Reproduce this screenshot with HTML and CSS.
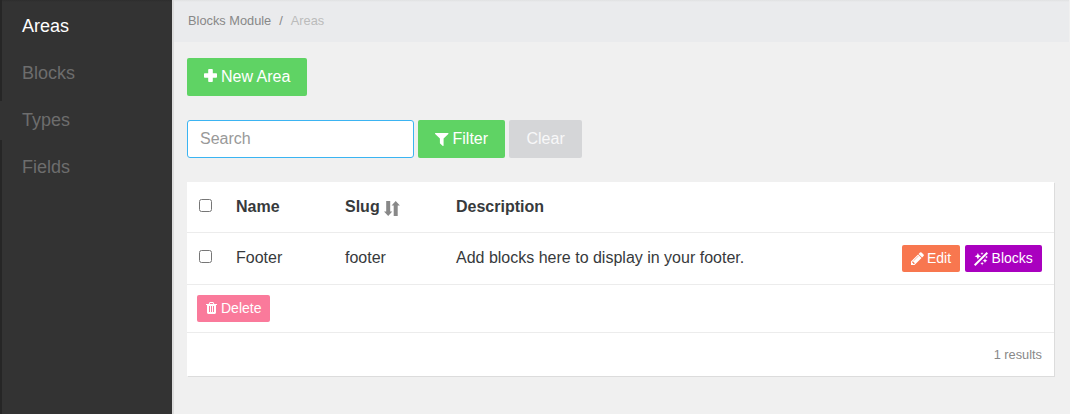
FILE: index.html
```html
<!DOCTYPE html>
<html lang="en">
<head>
<meta charset="utf-8">
<title>Areas</title>
<link rel="stylesheet" href="styles.css">
</head>
<body>
<div class="app">
  <nav class="sidebar">
    <a class="nav-link active">Areas</a>
    <a class="nav-link">Blocks</a>
    <a class="nav-link">Types</a>
    <a class="nav-link">Fields</a>
  </nav>
  <main class="main">
    <div class="breadcrumb"><span>Blocks Module</span><span class="sep">/</span><span class="current">Areas</span></div>
    <div class="content">
      <div class="actions">
        <a class="btn success new-area"><svg class="icon plus" viewBox="0 0 13 13"><path d="M5 0h3q.8 0 .8.8v3.4h3.4q.8 0 .8.8v3q0 .8-.8.8H8.800v3.400q0 .8-.8.8H5q-.8 0-.8-.8V8.800H.8Q0 8.800 0 8V5q0-.8.8-.8h3.400V.8Q4.200 0 5 0z"/></svg>New Area</a>
      </div>
      <form class="filters">
        <input class="search" type="text" placeholder="Search">
        <a class="btn success filter"><svg class="icon funnel" viewBox="192 256 1408 1408" preserveAspectRatio="none"><path d="M1595 295q17 41-14 70l-493 493v742q0 42-39 59-13 5-25 5-27 0-45-19l-256-256q-19-19-19-45v-486l-493-493q-31-29-14-70 17-39 59-39h1280q42 0 59 39z"/></svg>Filter</a>
        <a class="btn muted clear">Clear</a>
      </form>
      <section class="table">
        <div class="row head">
          <input type="checkbox" class="check">
          <span>Name</span>
          <span>Slug <svg class="sort" viewBox="0 0 16 15"><path d="M2.200 0h4v10.500h2.100L4.200 15 0 10.500h2.200zM9.700 15V4.500H7.600L11.700 0l4.200 4.500h-2.200V15z"/></svg></span>
          <span>Description</span>
        </div>
        <div class="row item">
          <input type="checkbox" class="check">
          <span>Footer</span>
          <span>footer</span>
          <span>Add blocks here to display in your footer.</span>
          <div class="buttons">
            <a class="btn small edit"><svg class="icon pencil" viewBox="128 128 1536 1536"><path d="M491 1536l91-91-235-235-91 91v107h128v128h107zm523-928q0-22-22-22-10 0-17 7l-542 542q-7 7-7 17 0 22 22 22 10 0 17-7l542-542q7-7 7-17zm-54-192l416 416-832 832h-416v-416zm683 96q0 53-37 90l-166 166-416-416 166-165q36-38 90-38 53 0 91 38l235 234q37 39 37 91z"/></svg>Edit</a>
            <a class="btn small blocks"><svg class="icon wand" viewBox="0 0 14 14"><path d="M0 12.600 12.600 0 14 1.400 1.400 14z"/><path d="M3.900.9l1 2.300 2.300 1-2.300 1-1 2.300-1-2.300-2.300-1 2.300-1zM11 6.300l.7 1.700 1.700.7-1.700.7-.7 1.700-.7-1.700-1.700-.7 1.700-.7zM8 0l.4 1.200 1.200.4-1.200.4L8 3.200 7.600 2l-1.200-.4 1.200-.4zM8.100 9.800l.5 1.300 1.300.5-1.300.5-.5 1.300-.5-1.300-1.300-.5 1.300-.5zM12.500 3.500l.4 1.100 1.100.4-1.100.4-.4 1.100-.4-1.100-1.100-.4 1.100-.4z"/></svg>Blocks</a>
          </div>
        </div>
        <div class="row bulk">
          <a class="btn small delete"><svg class="icon trash" viewBox="192 128 1408 1536" preserveAspectRatio="none"><path d="M704 1376v-704q0-14-9-23t-23-9h-64q-14 0-23 9t-9 23v704q0 14 9 23t23 9h64q14 0 23-9t9-23zm256 0v-704q0-14-9-23t-23-9h-64q-14 0-23 9t-9 23v704q0 14 9 23t23 9h64q14 0 23-9t9-23zm256 0v-704q0-14-9-23t-23-9h-64q-14 0-23 9t-9 23v704q0 14 9 23t23 9h64q14 0 23-9t9-23zm-544-992h448l-48-117q-7-9-17-11h-317q-10 2-17 11zm928 32v64q0 14-9 23t-23 9h-96v948q0 83-47 143.5t-113 60.5h-832q-66 0-113-58.5t-47-141.5v-952h-96q-14 0-23-9t-9-23v-64q0-14 9-23t23-9h309l70-167q15-37 54-63t79-26h320q40 0 79 26t54 63l70 167h309q14 0 23 9t9 23z"/></svg>Delete</a>
        </div>
        <div class="row total">1 results</div>
      </section>
    </div>
  </main>
</div>
</body>
</html>
```
FILE: styles.css
```css
* { box-sizing: border-box; }
body {
  margin: 0;
  background: #f0f0f0;
  color: #373a3c;
  font: 16px/24px "Liberation Sans", Arial, sans-serif;
}
.app { display: flex; height: 414px; overflow: hidden; }
.sidebar {
  width: 172px;
  flex: none;
  padding: 3px 0 0 22px;
  background:
    linear-gradient(#262626, #262626) 0 0 / 2px 101px no-repeat,
    linear-gradient(#262626, #262626) 0 140px / 2px 274px no-repeat,
    linear-gradient(#2d2d2d, #333) 0 0 / 100% 2px no-repeat,
    #333;
}
.nav-link { display: block; height: 47px; font-size: 18px; line-height: 46px; color: #6d6d6d; }
.nav-link.active { color: #fff; }
.main { flex: 1; border-left: 2px solid #dcdcdc; }
.breadcrumb {
  display: flex;
  height: 42px;
  padding-left: 14px;
  margin-right: 1px;
  background: linear-gradient(#e0e1e2, #eaebed) 0 0 / 100% 2px no-repeat, #eaebed;
  font-size: 12.8px;
  line-height: 41px;
  color: #888;
}
.sep { margin: 0 8px; }
.current { color: #bbb; }
.content { padding: 16px 15px 0 13px; }
.actions, .filters { display: flex; height: 38px; margin-bottom: 24px; }
.filters { gap: 4px; }
.btn {
  display: flex;
  align-items: center;
  height: 38px;
  padding-bottom: 1px;
  border-radius: 2px;
  color: #fff;
  white-space: nowrap;
}
.icon, .sort { fill: currentColor; flex: none; }
.success { background: #5fd364; }
.new-area { width: 120px; padding-left: 17px; }
.plus { width: 13px; height: 13px; margin: 0 4px 2px 0; }
.search {
  width: 227px;
  height: 38px;
  padding: 0 12px 1px;
  border: 1px solid #3bb4f2;
  border-radius: 3px;
  background: #fff;
  font: inherit;
}
.search::placeholder { color: #999; }
.filter { width: 87px; padding-left: 17px; }
.funnel { width: 13.5px; height: 13px; margin: 1px 4px 0 0; }
.muted { background: #d5d6d8; color: #f8f8f9; }
.clear { width: 73px; padding-left: 17.5px; }
.table { width: 867px; background: #fff; box-shadow: 1px 1px 0 #dcdcdc; }
.row {
  display: grid;
  grid-template-columns: 37px 109px 111px 1fr auto;
  align-items: center;
  padding: 0 12px;
  border-bottom: 1px solid #ececec;
}
.head { height: 51px; font-weight: bold; }
.item { height: 52px; }
.head span, .item span { padding-bottom: 1px; }
.check { width: 13px; height: 13px; margin: 0 0 4px; }
.sort { width: 16px; height: 15px; color: #888; vertical-align: -4px; }
.buttons { display: flex; gap: 5px; }
.small { height: 27px; padding: 0 0 1px 9px; font-size: 14px; }
.edit { width: 58px; background: #f8774f; }
.pencil { width: 13px; height: 13px; margin-right: 3px; }
.blocks { width: 77px; background: #a900bf; }
.wand { width: 14px; height: 14px; margin: 1px 3.600px 0 0; }
.bulk { display: flex; height: 48px; padding: 0 10px 1px; }
.delete { width: 73px; background: #fa7a9b; }
.trash { width: 11px; height: 12px; margin-right: 4px; }
.total { display: flex; justify-content: flex-end; height: 43px; border: 0; font-size: 12.8px; color: #888; }
```
